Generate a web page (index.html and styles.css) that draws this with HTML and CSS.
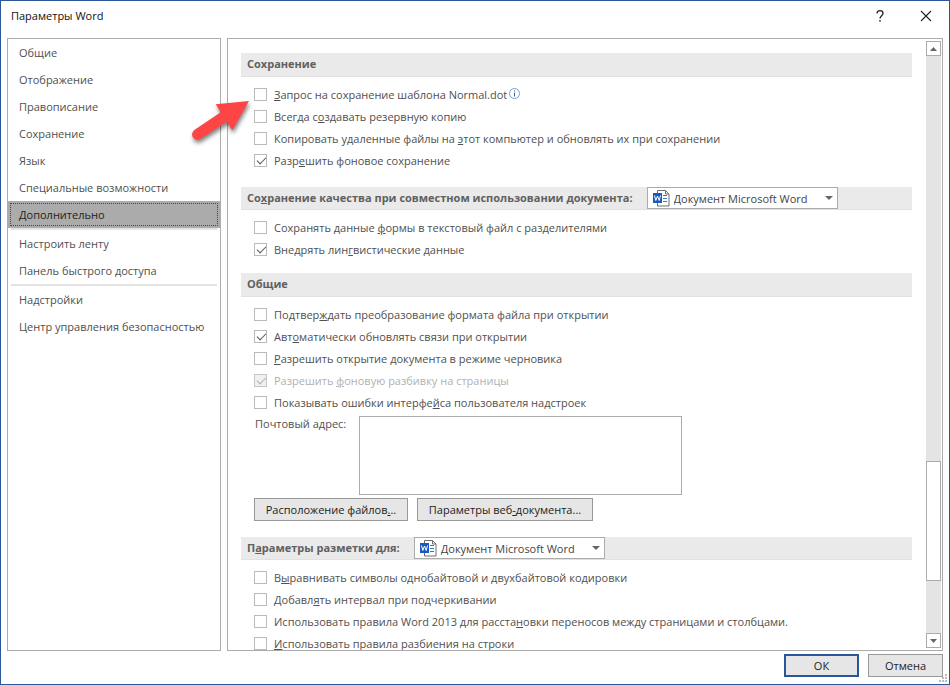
FILE: index.html
```html
<!DOCTYPE html>
<html lang="ru">
<head>
    <meta charset="UTF-8">
    <meta name="viewport" content="width=device-width, initial-scale=1.0">
    <title>Параметры Word</title>
    <link rel="stylesheet" href="styles.css">
</head>
<body>
    <svg class="symbols" width="0" height="0" aria-hidden="true">
        <symbol id="word-doc" viewBox="0 0 17 17">
            <path d="M4.500 3V.5h8l3.500 3.500v12H4.500v-3.500" fill="#fff" stroke="#6e6e6e"/>
            <path d="M12.500 .5v3.500h3.500" fill="none" stroke="#6e6e6e"/>
            <rect x="0" y="3" width="9" height="10" fill="#185abd"/>
            <path d="M1.500 5.500l1.300 5L4.500 6l1.700 4.500 1.300-5" fill="none" stroke="#fff"/>
            <path d="M10 5.500h4M10 8.500h4M10 11.500h4" stroke="#2b7cd3"/>
        </symbol>
    </svg>

    <div class="dialog">
        <header class="title-bar">
            <h1>Параметры Word</h1>
            <button class="title-btn" type="button" aria-label="Справка">
                <svg width="12" height="14" viewBox="0 0 12 14"><path d="M3 4.500C3 2.500 4.200 1.600 6 1.600s3 1 3 2.600c0 2.400-3 2.600-3 5.400M6 11v1.700" fill="none" stroke="#222" stroke-width="1.300"/></svg>
            </button>
            <button class="title-btn" type="button" aria-label="Закрыть">
                <svg width="12" height="12" viewBox="0 0 12 12"><path d="M1 1l10 10M11 1L1 11" stroke="#222" stroke-width="1.100"/></svg>
            </button>
        </header>

        <main class="main">
            <nav class="sidebar">
                <a href="#">Общие</a>
                <a href="#">Отображение</a>
                <a href="#">Правописание</a>
                <a href="#">Сохранение</a>
                <a href="#">Язык</a>
                <a href="#">Специальные возможности</a>
                <a href="#" class="active">Дополнительно</a>
                <hr>
                <a href="#">Настроить ленту</a>
                <a href="#">Панель быстрого доступа</a>
                <hr>
                <a href="#">Надстройки</a>
                <a href="#">Центр управления безопасностью</a>
            </nav>

            <div class="content">
                <div class="options">
                    <section>
                        <h2>Сохранение</h2>
                        <div class="rows">
                            <label><input type="checkbox"><span><u>З</u>апрос на сохранение шаблона Normal.dot</span>
                                <svg class="info" width="11" height="11" viewBox="0 0 11 11"><circle cx="5.500" cy="5.500" r="5" fill="none" stroke="#7a9fd0"/><path d="M5.500 2.500v1M5.500 4.500v4" stroke="#3c68a8"/></svg>
                            </label>
                            <label><input type="checkbox"><span>Всегда с<u>о</u>здавать резервную копию</span></label>
                            <label><input type="checkbox"><span>Копировать удаленные файлы на <u>э</u>тот компьютер и обновлять их при сохранении</span></label>
                            <label><input type="checkbox" checked><span>Разр<u>е</u>шить фоновое сохранение</span></label>
                        </div>
                    </section>

                    <section>
                        <h2 class="with-select">
                            <label for="share-doc">Со<u>х</u>ранение качества при совместном использовании документа:</label>
                            <span class="doc-select">
                                <svg class="doc-icon" width="17" height="17"><use href="#word-doc"/></svg>
                                <select id="share-doc"><option>Документ Microsoft Word</option></select>
                            </span>
                        </h2>
                        <div class="rows">
                            <label><input type="checkbox"><span>Сохранять данные <u>ф</u>ормы в текстовый файл с разделителями</span></label>
                            <label><input type="checkbox" checked><span>Внедрять лин<u>г</u>вистические данные</span></label>
                        </div>
                    </section>

                    <section>
                        <h2>Общие</h2>
                        <div class="rows">
                            <label><input type="checkbox"><span>Подтвер<u>ж</u>дать преобразование формата файла при открытии</span></label>
                            <label><input type="checkbox" checked><span>Авт<u>о</u>матически обновлять связи при открытии</span></label>
                            <label><input type="checkbox"><span><u>Р</u>азрешить открытие документа в режиме черновика</span></label>
                            <label class="disabled"><input type="checkbox" checked disabled><span>Разрешить <u>ф</u>оновую разбивку на страницы</span></label>
                            <label><input type="checkbox"><span>Показывать ошибки интерфе<u>й</u>са пользователя надстроек</span></label>
                        </div>
                        <div class="address">
                            <label for="address">Почтовый а<u>д</u>рес:</label>
                            <textarea id="address"></textarea>
                        </div>
                        <div class="buttons">
                            <button class="btn files" type="button">Расположение файлов<u>.</u>..</button>
                            <button class="btn web" type="button">Параметры веб<u>-</u>документа...</button>
                        </div>
                    </section>

                    <section>
                        <h2 class="with-select">
                            <label for="layout-doc">П<u>а</u>раметры разметки для:</label>
                            <span class="doc-select">
                                <svg class="doc-icon" width="17" height="17"><use href="#word-doc"/></svg>
                                <select id="layout-doc"><option>Документ Microsoft Word</option></select>
                            </span>
                        </h2>
                        <div class="rows">
                            <label><input type="checkbox"><span>В<u>ы</u>равнивать символы однобайтовой и двухбайтовой кодировки</span></label>
                            <label><input type="checkbox"><span>Добавл<u>я</u>ть интервал при подчеркивании</span></label>
                            <label><input type="checkbox"><span>Использовать правила Word 2013 для расста<u>н</u>овки переносов между страницами и столбцами.</span></label>
                            <label><input type="checkbox"><span><u>И</u>спользовать правила разбиения на строки</span></label>
                        </div>
                    </section>
                </div>

                <div class="scrollbar">
                    <button type="button" aria-label="Вверх"><svg width="7" height="4" viewBox="0 0 7 4"><path d="M0 4L3.500 0 7 4z" fill="#666"/></svg></button>
                    <div class="track-above"></div>
                    <div class="thumb"></div>
                    <div class="track-below"></div>
                    <button type="button" aria-label="Вниз"><svg width="7" height="4" viewBox="0 0 7 4"><path d="M0 0h7L3.500 4z" fill="#666"/></svg></button>
                </div>
            </div>
        </main>

        <footer class="footer">
            <button class="btn ok" type="button">ОК</button>
            <button class="btn cancel" type="button">Отмена</button>
        </footer>

        <svg class="grip" width="8" height="8" viewBox="0 0 8 8"><path d="M6 0h2v2H6zM3 3h2v2H3zM6 3h2v2H6zM0 6h2v2H0zM3 6h2v2H3zM6 6h2v2H6z" fill="#bbb"/></svg>

        <!-- red pointer to the Normal.dot option -->
        <svg class="pointer" width="70" height="56" viewBox="0 0 70 56">
            <path d="M64 6L30.700 9.300l5 8L9.700 34.800a5.300 5.300 0 0 0 5.600 9.200l26.400-17.300 5.600 8.600z" fill="#fd4545"/>
        </svg>
    </div>
</body>
</html>
```
FILE: styles.css
```css
* {
    box-sizing: border-box;
}
body {
    margin: 0;
    font-family: 'Open Sans', 'Noto Sans', sans-serif;
    font-size: 11px;
    line-height: 16px;
    color: #505050;
    background: #fff;
}
button, select, textarea {
    font: inherit;
}
.symbols {
    position: absolute;
}
.dialog {
    position: relative;
    display: flex;
    flex-direction: column;
    height: 100vh;
    padding: 0 6px 7px;
    border: 1px solid #2b579a;
}
.title-bar {
    display: flex;
    flex: none;
    align-items: center;
    height: 37px;
    padding: 0 0 7px 4px;
}
h1 {
    flex: 1;
    margin: 0;
    font-size: 11px;
    font-weight: normal;
    color: #111;
}
.title-btn {
    display: flex;
    align-items: center;
    justify-content: center;
    width: 46px;
    height: 30px;
    padding: 0;
    border: 0;
    background: none;
}
.title-btn:last-child {
    margin-right: -6px;
}
.main {
    display: flex;
    flex: 1;
    gap: 6px;
    min-height: 0;
}
.sidebar {
    flex: none;
    width: 214px;
    border: 1px solid #ababab;
}
.sidebar a {
    display: block;
    height: 27px;
    padding: 0 11px;
    line-height: 28px;
    color: #505050;
    text-decoration: none;
    white-space: nowrap;
}
.sidebar a.active {
    color: #222;
    background: #ababab;
    outline: 1px dotted #444;
    outline-offset: -3px;
}
.sidebar hr {
    height: 2px;
    margin: 0 3px;
    border: 0;
    background: #e3e3e3;
}
.content {
    display: flex;
    flex: 1;
    min-width: 0;
    border: 1px solid #ababab;
}
.options {
    flex: 1;
    min-width: 0;
    padding: 14px 14px 0 13px;
    overflow: hidden;
}
section {
    margin-bottom: 12px;
}
h2 {
    display: flex;
    align-items: flex-start;
    gap: 14px;
    height: 24px;
    margin: 0;
    padding-left: 6px;
    border-bottom: 1px solid #e1e1e1;
    background: #eaeaea;
    font-size: 11px;
    line-height: 22px;
    color: #606060;
    white-space: nowrap;
}
h2.with-select {
    height: 23px;
    margin-top: 15px;
}
.rows {
    padding: 7px 0 0 13px;
}
.rows label {
    display: flex;
    align-items: center;
    height: 22px;
    white-space: nowrap;
}
.rows label.disabled {
    color: #b1b1b1;
}
input[type="checkbox"] {
    flex: none;
    width: 13px;
    height: 13px;
    margin: 0 7px 1px 0;
    border: 1px solid #bbb;
    background: #fff;
    appearance: none;
}
input[type="checkbox"]:checked::after {
    content: '';
    display: block;
    width: 8px;
    height: 4px;
    margin: 2px 0 0 2px;
    border: solid #555;
    border-width: 0 0 1px 1px;
    transform: rotate(-45deg);
}
input[type="checkbox"]:disabled {
    border-color: #c6c6c6;
    background: #f0f0f0;
}
input[type="checkbox"]:disabled::after {
    border-color: #b1b1b1;
}
.info {
    margin: 0 0 4px 2px;
}
.doc-select {
    position: relative;
    display: flex;
}
.doc-select::after {
    content: '';
    position: absolute;
    top: 9px;
    right: 5px;
    border: solid transparent;
    border-width: 4px 4px 0;
    border-top-color: #666;
}
.doc-icon {
    position: absolute;
    top: 3px;
    left: 6px;
}
select {
    width: 191px;
    height: 22px;
    padding: 0 0 0 26px;
    border: 1px solid #ababab;
    border-radius: 0;
    background: #fff;
    color: #444;
    appearance: none;
}
h2 select {
    font-weight: normal;
}
.address {
    display: flex;
    gap: 10px;
    padding: 2px 0 0 14px;
}
.address label {
    min-width: 94px;
}
textarea {
    width: 323px;
    height: 79px;
    border: 1px solid #ababab;
    resize: none;
}
.buttons {
    display: flex;
    gap: 9px;
    padding: 3px 0 1px 13px;
}
.btn {
    height: 23px;
    padding: 0;
    border: 1px solid #999;
    background: #e6e6e6;
    color: #222;
    white-space: nowrap;
}
.files {
    width: 154px;
}
.web {
    width: 176px;
}
.scrollbar {
    display: flex;
    flex: none;
    flex-direction: column;
    width: 15px;
    margin: 2px 1px 2px 0;
    background: #e4e4e4;
}
.scrollbar button {
    display: flex;
    flex: none;
    align-items: center;
    justify-content: center;
    height: 15px;
    padding: 0;
    border: 1px solid #ababab;
    background: #fff;
}
.track-above {
    flex: 406;
}
.thumb {
    flex: 119;
    border: 1px solid #ababab;
    background: #fff;
}
.track-below {
    flex: 52;
}
.footer {
    display: flex;
    flex: none;
    justify-content: flex-end;
    gap: 9px;
    padding-top: 3px;
}
.btn.ok, .btn.cancel {
    width: 75px;
}
.btn.ok {
    border: 2px solid #2b579a;
}
.grip {
    position: absolute;
    right: 2px;
    bottom: 2px;
}
.pointer {
    position: absolute;
    top: 94px;
    left: 184px;
    filter: drop-shadow(1px 3px 2px rgba(0, 0, 0, 0.5));
    pointer-events: none;
}
```
